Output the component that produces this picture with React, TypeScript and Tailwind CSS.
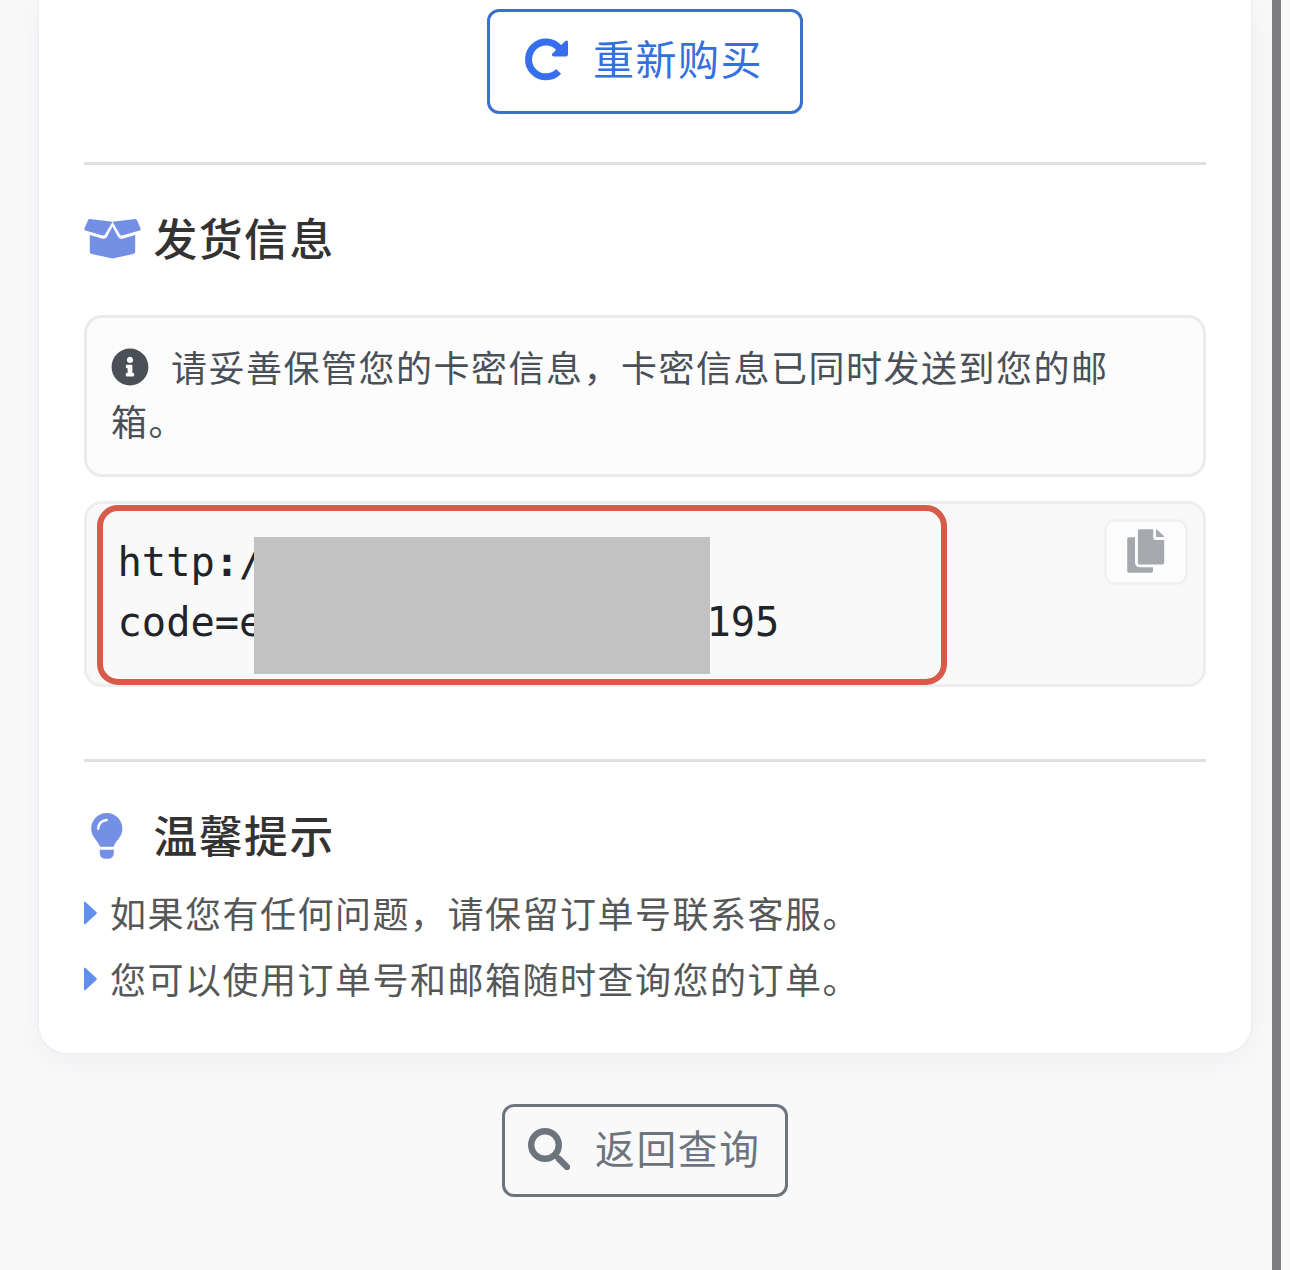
import type { ReactNode } from "react";
import { FaInfoCircle } from "react-icons/fa";

const tips = [
  "如果您有任何问题，请保留订单号联系客服。",
  "您可以使用订单号和邮箱随时查询您的订单。",
];

function RedoIcon() {
  return (
    <svg viewBox="0 0 42 42" className="h-[42px] w-[42px] shrink-0 overflow-visible">
      <path d="M32.6 32.4A17.4 17.4 0 1 1 33.4 9.4" fill="none" stroke="currentColor" strokeWidth="7" />
      <path d="M39 2.300q3-2.300 3 1.300v12q0 1.800-1.800 1.800H28.100q-3.600-.4-1.400-3.200z" fill="currentColor" />
    </svg>
  );
}

function BoxIcon() {
  return (
    <svg viewBox="0 0 57 41" className="h-[41px] w-[57px]" fill="currentColor">
      <path d="M5.8 1l22.700 2.800L21 16.600q-.8 1.300-2.300.9L1.400 12.500Q-.2 12 .5 10.300L4 2.200Q4.500.9 5.800 1z" />
      <path d="M51.200 1L28.500 3.800 36 16.600q.8 1.300 2.300.9l17.300-5q1.600-.5.9-2.200L53 2.200Q52.500.9 51.200 1z" />
      <path d="M5.800 17l13 3.700q2.700.6 4.100-1.700L28.500 8.500 34.100 19q1.400 2.300 4.100 1.700l13-3.700v16.500q0 2-2 2.500l-20.700 4.600L7.800 36q-2-.5-2-2.500z" />
    </svg>
  );
}

function BulbIcon() {
  return (
    <svg viewBox="0 0 32 46" className="ml-[7px] h-[46px] w-[32px]">
      <path
        d="M15.8 0C24.5 0 31.4 7 31.4 15.6c0 4-1.4 7.4-3.8 10.2-2.1 2.5-4.1 5.6-5.1 8H9.1c-1-2.4-3-5.5-5.1-8A15.6 15.6 0 0 1 .2 15.6C.2 7 7.1 0 15.8 0z"
        fill="currentColor"
      />
      <path d="M7.2 15.8q.4-7.800 8.600-8.800" fill="none" stroke="#fff" strokeWidth="2.4" strokeLinecap="round" />
      <path d="M8.800 36.800h14v3.200q-.4 5.800-5.600 5.800h-2.800q-5.200 0-5.600-5.800z" fill="currentColor" />
    </svg>
  );
}

function SearchIcon() {
  return (
    <svg viewBox="0 0 42 42" className="h-[42px] w-[42px]" fill="none" stroke="currentColor">
      <circle cx="17" cy="17" r="13.8" strokeWidth="6.4" />
      <path d="M27 27l4 4" strokeWidth="5" />
      <path d="M31 31l8 8" strokeWidth="6.4" strokeLinecap="round" />
    </svg>
  );
}

function CopyIcon() {
  return (
    <svg viewBox="0 0 38 44" className="h-[44px] w-[38px]" fill="currentColor">
      <path d="M2 8.3h6v25q0 4.9 4.7 4.9H26V42q0 1.8-1.8 1.8H2Q.2 43.8.2 42V10Q.2 8.3 2 8.3z" />
      <path d="M12.7.3h13.5v8.4q0 2.4 2.4 2.4h8.6v22.6q0 1.8-1.8 1.8H12.7q-1.8 0-1.8-1.8V2.1q0-1.8 1.8-1.8z" />
      <path d="M29 .3q.7 0 1.4.7l5.9 5.6q.7.7.7 1.5h-8z" />
    </svg>
  );
}

function Divider() {
  return <div className="h-[3px] shrink-0 bg-[#dee0e4]" />;
}

function Heading({ icon, children }: { icon: ReactNode; children: ReactNode }) {
  return (
    <h2 className="flex h-[60px] items-center text-[43.8px] font-medium tracking-[1.5px] text-[#333]">
      <span className="mb-[3px] flex w-[69.5px] shrink-0 text-[#7390e5]">{icon}</span>
      <span className="mb-1">{children}</span>
    </h2>
  );
}

export default function App() {
  return (
    <div className="flex h-[1270px] w-[1290px] overflow-hidden bg-[#f9f9fa] font-['Noto_Sans_CJK_SC',sans-serif]">
      <main className="flex w-[1272px] flex-col items-center pr-[21px] pl-[39px]">
        <section className="flex h-[1053px] w-[1212px] shrink-0 flex-col rounded-b-[28px] bg-white px-[45px] pt-[9px] shadow-[0_6px_36px_rgba(30,40,60,0.05),0_0_3px_rgba(30,40,60,0.08)]">
          <button className="flex h-[105px] w-[316px] shrink-0 items-center self-center rounded-[12px] border-[3px] border-[#3c6fd2] pl-9 text-[41px] tracking-[1.5px] text-[#3470df]">
            <span className="mr-[25px] mb-1 text-[#356fee]">
              <RedoIcon />
            </span>
            <span className="mb-[7px]">重新购买</span>
          </button>

          <div className="mt-12">
            <Divider />
          </div>
          <div className="mt-[45px]">
            <Heading icon={<BoxIcon />}>发货信息</Heading>
          </div>

          <div className="mt-[45px] h-[162px] rounded-[18px] border-[3px] border-[#e9ebed] bg-[#fcfcfd] px-[24px] pt-[21px] text-[36px] leading-[54px] tracking-[1.5px] text-[#495057]">
            <FaInfoCircle className="mr-[22px] inline-block h-[38px] w-[38px] align-[-4px]" />
            请妥善保管您的卡密信息，卡密信息已同时发送到您的邮箱。
          </div>

          <div className="relative mt-6 flex h-[186px] justify-between rounded-[18px] border-[3px] border-[#eee] bg-[#f9f9f9] pt-[15px] pr-[15.5px] pl-[30.5px]">
            <pre className="mt-[13px] font-['DejaVu_Sans_Mono',monospace] text-[40.4px] leading-[60px] text-[#212529]">
              <div>
                http<span className="font-bold">:</span>/
              </div>
              <div>
                code=e<span className="inline-block w-[443px]" />195
              </div>
            </pre>
            <button className="flex h-[66px] w-[84px] items-start justify-center rounded-[11px] border-[3px] border-[#f2f2f4] bg-[#fdfdfe] pt-[7px] text-[#a5a8ad]">
              <CopyIcon />
            </button>
            <div className="absolute top-[32.500px] left-[166.500px] h-[137px] w-[456px] bg-[#c2c2c2]" />
            <div className="absolute top-[1px] left-[10px] h-[180px] w-[850px] rounded-[21px] border-[6px] border-[#d85b49]" />
          </div>

          <div className="mt-[72px]">
            <Divider />
          </div>
          <div className="mt-[45px]">
            <Heading icon={<BulbIcon />}>温馨提示</Heading>
          </div>
          <ul className="mt-[13px] text-[36px] tracking-[1.5px] text-[#555759]">
            {tips.map((tip) => (
              <li key={tip} className="flex h-[66px] items-center">
                <svg viewBox="0 0 13 24" className="mr-[13px] h-[24px] w-[13px] fill-[#608ff0]">
                  <path d="M0 2Q0-.4 1.8 1.2l10.5 9.7q1.1 1.1 0 2.2L1.8 22.8Q0 24.4 0 22z" />
                </svg>
                <span className="mb-[2px]">{tip}</span>
              </li>
            ))}
          </ul>
        </section>

        <button className="mt-[51px] flex h-[93px] w-[286px] shrink-0 items-center rounded-[12px] border-[3px] border-[#6c757d] pl-[23px] text-[39.7px] tracking-[1.7px] text-[#6c757d]">
          <span className="mr-[25px] mb-1 shrink-0">
            <SearchIcon />
          </span>
          <span className="mb-2">返回查询</span>
        </button>
      </main>
      <div className="w-[9px] bg-[#7c7c7e]" />
    </div>
  );
}
